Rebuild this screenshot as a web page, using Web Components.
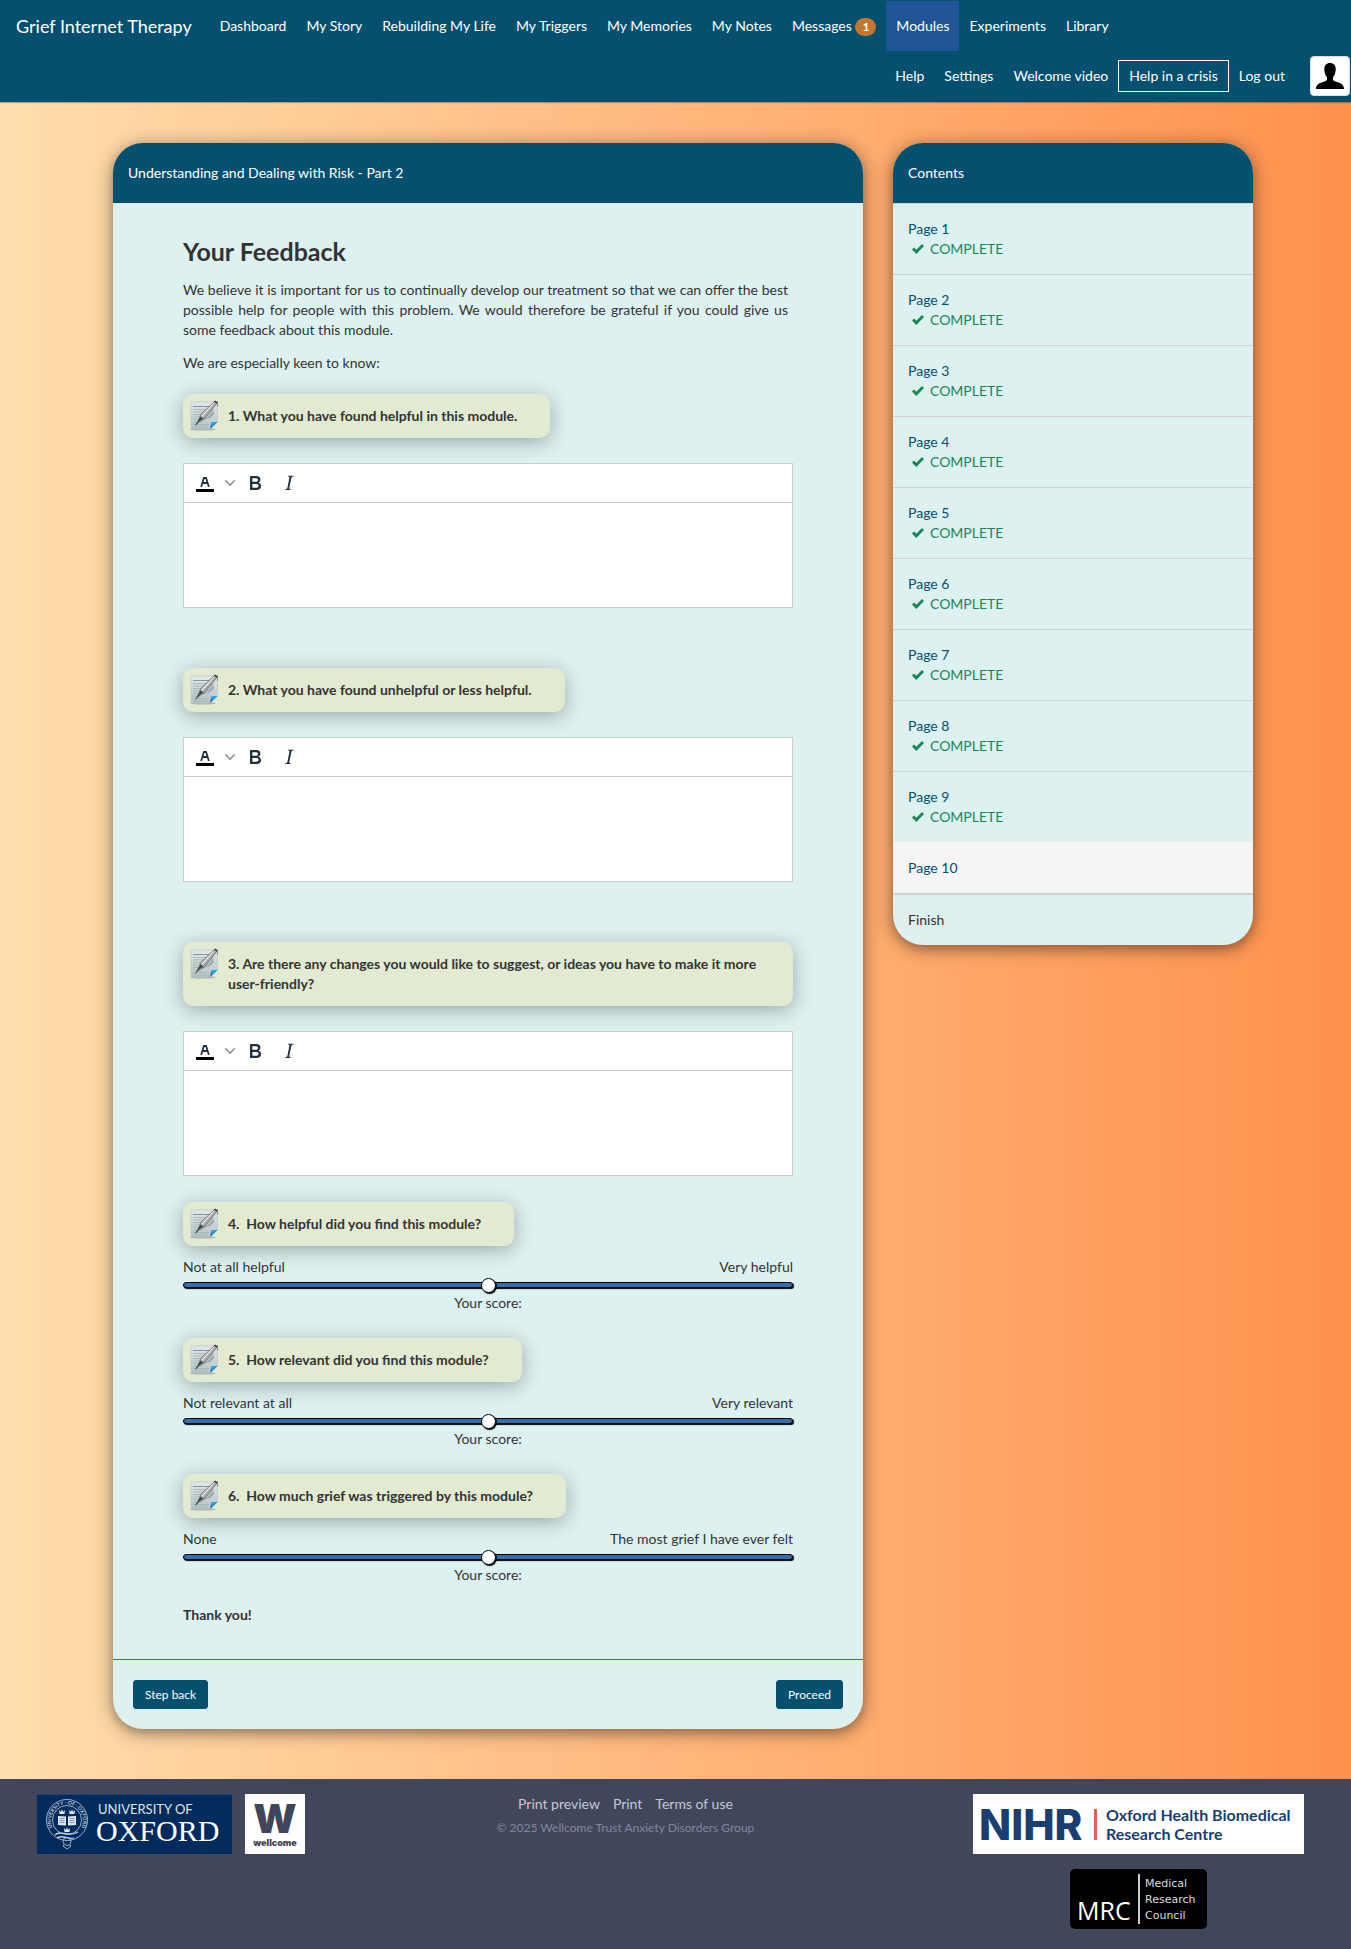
<!DOCTYPE html>
<html lang="en">
<head>
<meta charset="utf-8">
<meta name="viewport" content="width=device-width, initial-scale=1">
<title>Grief Internet Therapy</title>
<style>
  :root { --brand: #04506e; --panel: #ddf1f0; --rule: #ccc; --ink: #333; }
  body {
    margin: 0; min-height: 100vh; display: flex; flex-direction: column;
    font: 14px/20px Lato, sans-serif; color: var(--ink);
    background: linear-gradient(to right, #ffdead, #ff914d);
  }
  main {
    flex: 1; display: grid; grid-template-columns: minmax(0, 750px) minmax(0, 360px);
    gap: 30px; justify-content: center; align-items: start; padding: 41px 0 50px 15px;
  }
  h1 { margin: 0 0 16px; font-size: 25px; line-height: 26px; font-weight: 700; }
  p { margin: 0 5px 13px 0; text-align: justify; }
  p.lead-in { margin-bottom: 21px; }
  p.thanks { margin: 0; font-weight: 700; }
</style>
</head>
<body>
<site-nav></site-nav>
<main>
  <panel-card>
    <span slot="title">Understanding and Dealing with Risk - Part 2</span>
    <module-form>
      <h1>Your Feedback</h1>
      <p>We believe it is important for us to continually develop our treatment so that we can offer the best possible help for people with this problem. We would therefore be grateful if you could give us some feedback about this module.</p>
      <p class="lead-in">We are especially keen to know:</p>
      <text-question>1. What you have found helpful in this module.</text-question>
      <text-question>2. What you have found unhelpful or less helpful.</text-question>
      <text-question last>3. Are there any changes you would like to suggest, or ideas you have to make it more user-friendly?</text-question>
      <scale-question low="Not at all helpful" high="Very helpful">4.&nbsp; How helpful did you find this module?</scale-question>
      <scale-question low="Not relevant at all" high="Very relevant">5.&nbsp; How relevant did you find this module?</scale-question>
      <scale-question last low="None" high="The most grief I have ever felt">6.&nbsp; How much grief was triggered by this module?</scale-question>
      <p class="thanks">Thank you!</p>
    </module-form>
  </panel-card>
  <panel-card>
    <span slot="title">Contents</span>
    <contents-list></contents-list>
  </panel-card>
</main>
<site-footer></site-footer>

<script>
const define = (name, html, setup) => {
  const template = document.createElement('template');
  template.innerHTML = '<style>*{box-sizing:border-box}</style>' + html;
  customElements.define(name, class extends HTMLElement {
    connectedCallback() {
      if (this.shadowRoot) return;
      const root = this.attachShadow({ mode: 'open' });
      root.append(template.content.cloneNode(true));
      if (setup) setup(this, root);
    }
  });
};

define('site-nav', `
<style>
  :host { display: block; background: var(--brand); color: #fff; padding-top: 1px; border-bottom: 1px solid #0b4a63; box-shadow: 0 1px 1px rgba(0,0,0,.25); }
  nav { display: flex; flex-wrap: wrap; }
  a { color: inherit; text-decoration: none; padding: 15px 10px; white-space: nowrap; }
  .brand { font-size: 18px; padding: 15px 18px 15px 16px; }
  .active { background: #1f5594; }
  .badge { display: inline-block; min-width: 21px; padding: 3px 7px; border-radius: 10px; background: #c5762d; font-size: 12px; line-height: 12px; font-weight: 700; text-align: center; }
  .second { justify-content: flex-end; align-items: center; padding-right: 1px; }
  .crisis { border: 1px solid #fff; padding: 5px 10px; }
  .avatar { display: flex; padding: 0; margin: 0 0 0 15px; width: 40px; height: 40px; border: 1px solid #ddd; border-radius: 4px; background: #fff; align-items: center; justify-content: center; }
</style>
<nav aria-label="Main">
  <a class="brand" href="#">Grief Internet Therapy</a>
  <a href="#">Dashboard</a><a href="#">My Story</a><a href="#">Rebuilding My Life</a><a href="#">My Triggers</a><a href="#">My Memories</a><a href="#">My Notes</a><a href="#">Messages <span class="badge">1</span></a><a class="active" href="#" aria-current="page">Modules</a><a href="#">Experiments</a><a href="#">Library</a>
</nav>
<nav class="second" aria-label="Account">
  <a href="#">Help</a><a href="#">Settings</a><a href="#">Welcome video</a><a class="crisis" href="#">Help in a crisis</a><a href="#">Log out</a>
  <a class="avatar" href="#" aria-label="Profile">
    <svg width="30" height="30" viewBox="0 0 30 30"><path d="M15 2c3.600 0 5.700 2.400 5.700 6 0 3.200-1 6.500-2.700 8.300v2.200c0 1 1.200 1.500 3.200 2.200 4 1.300 7.800 2.300 7.800 7.300H1c0-5 3.800-6 7.800-7.300 2-.7 3.200-1.200 3.200-2.200v-2.200C10.300 14.500 9.300 11.200 9.300 8c0-3.600 2.100-6 5.700-6z"/></svg>
  </a>
</nav>`);

define('panel-card', `
<style>
  :host { display: block; background: var(--panel); border-radius: 30px; overflow: hidden; box-shadow: 0 4px 8px rgba(0,0,0,.15), 0 3px 20px rgba(0,0,0,.4); }
  header { background: var(--brand); color: #fff; padding: 20px 15px; }
</style>
<header><slot name="title"></slot></header>
<slot></slot>`);

define('module-form', `
<style>
  :host { display: block; }
  .body { padding: 35px 70px 34px; }
  footer { display: flex; justify-content: space-between; padding: 20px; border-top: 1px solid #2a6db8; }
  button { font: 12px/18px Lato, sans-serif; color: #fff; background: var(--brand); border: 1px solid var(--brand); border-radius: 3px; padding: 5px 11px 4px; }
</style>
<form>
  <div class="body"><slot></slot></div>
  <footer><button type="button">Step back</button><button type="button">Proceed</button></footer>
</form>`);

define('note-icon', `
<style>:host { display: block; width: 30px; height: 31px; }</style>
<svg width="30" height="31" viewBox="0 0 30 31">
  <defs>
    <linearGradient id="paper" x1="0" y1="0" x2="0" y2="1"><stop offset="0" stop-color="#e2eaeb"/><stop offset=".45" stop-color="#cbd7d9"/><stop offset="1" stop-color="#b3c3c6"/></linearGradient>
    <linearGradient id="metal" x1="0" y1="0" x2="1" y2="1"><stop offset="0" stop-color="#f5f5f5"/><stop offset=".5" stop-color="#a9adad"/><stop offset="1" stop-color="#333"/></linearGradient>
  </defs>
  <ellipse cx="13" cy="29.300" rx="13" ry="1.200" fill="#8a9488" opacity=".6"/>
  <path d="M1 2h26.500v20L20 29H1z" fill="url(#paper)" stroke="#b5c3c4" stroke-width=".6"/>
  <path d="M3 6.500h17" stroke="#8b9799" stroke-width="1"/>
  <path d="M3 9.500h15M3 12h13M3 14.500h10M3 17h8M3 19.500h5M3 22h3M3 24.500h16M3 27h15" stroke="#a5b3b5" stroke-width=".8"/>
  <path d="M8 23c5-1 13-7 15-14l1 5c-2 3-6 5-8 5-3 1-5 3-8 4z" fill="#67757a" opacity=".45"/>
  <path d="M24.500 1.500l2.500 1.700-12.500 16-3.500 1.300-5.500 5 4-7.500 1-3.500z" fill="url(#metal)" stroke="#666" stroke-width=".7"/>
  <path d="M23.500 3.500L11 17.500" stroke="#fff" stroke-width="1"/>
  <path d="M10.500 16l3 2.500-3 2-5 4.500 3.500-6z" fill="#444b4b"/>
  <path d="M24.500 1l3 2.200" stroke="#222" stroke-width="1.200"/><path d="M27.500 1v6" stroke="#888" stroke-width=".9"/>
  <path d="M20 29l1.500-6.500 6-.5z" fill="#0b6cc0"/>
  <path d="M21.500 22.500l6-.5-5.500 4z" fill="#25b1ee"/>
</svg>`);

/* Shared look of the highlighted question label */
const noteStyle = `
  .note { display: flex; width: fit-content; max-width: 100%; padding: 12px 33px 12px 7px; gap: 8px; border-radius: 10px; background: #e2ead2; font-weight: 700; box-shadow: 0 4px 20px rgba(0,0,0,.3); }
  note-icon { flex: none; margin: -6px 0 -5px; }`;

define('text-question', `
<style>
  :host { display: block; margin-bottom: 60px; }
  :host([last]) { margin-bottom: 26px; }
  ${noteStyle}
  .editor { margin-top: 25px; border: 1px solid var(--rule); background: #fff; }
  .tools { display: flex; padding-left: 4px; height: 39px; border-bottom: 1px solid var(--rule); }
  button { display: flex; align-items: center; justify-content: center; width: 34px; padding: 0; border: 0; background: none; fill: #222f3e; }
  button.more { width: 16px; fill: #8f969e; }
  textarea { display: block; width: 100%; height: 104px; padding: 10px; border: 0; outline: 0; resize: none; background: none; font: inherit; color: inherit; }
</style>
<label class="note" for="answer"><note-icon></note-icon><span><slot></slot></span></label>
<div class="editor">
  <div class="tools">
    <button type="button" aria-label="Text colour"><svg width="24" height="24" viewBox="0 0 24 24"><path fill="#000" d="M3 18h18v3H3z"/><path fill-rule="evenodd" d="M8.700 16h-.8a.5.5 0 01-.5-.6l2.700-9c.1-.3.3-.4.5-.4h2.800c.2 0 .4.1.5.4l2.700 9a.5.5 0 01-.5.6h-.8a.5.5 0 01-.4-.4l-.7-2.200c0-.3-.3-.4-.5-.4h-3.400c-.2 0-.4.1-.5.4l-.7 2.200c0 .3-.2.4-.4.4zm2.600-7.600l-.6 2a.5.5 0 00.5.6h1.600a.5.5 0 00.5-.6l-.6-2c0-.3-.3-.4-.5-.4h-.4c-.2 0-.4.1-.5.4z"/></svg></button>
    <button type="button" class="more" aria-label="Choose colour"><svg width="10" height="10" viewBox="0 0 10 10"><path d="M8.700 2.200c.3-.3.8-.3 1 0 .4.4.4.9 0 1.200L5.700 7.800c-.3.3-.9.3-1.200 0L.2 3.400a.8.8 0 010-1.200c.3-.3.8-.3 1.100 0L5 6l3.700-3.800z"/></svg></button>
    <button type="button" aria-label="Bold"><svg width="24" height="24" viewBox="0 0 24 24"><path fill-rule="evenodd" d="M7.800 19c-.3 0-.5 0-.6-.2l-.2-.5V5.700c0-.2 0-.4.2-.5l.6-.2h5c1.500 0 2.700.3 3.500 1 .7.6 1.100 1.400 1.100 2.500a3 3 0 01-.6 1.900c-.4.6-1 1-1.600 1.200.4.1.9.3 1.300.6s.8.7 1 1.200c.4.4.5 1 .5 1.600 0 1.300-.4 2.300-1.300 3-.8.7-2.100 1-3.800 1H7.800zm5-8.300c.6 0 1.200-.1 1.600-.5.4-.3.6-.7.6-1.300 0-1.100-.8-1.700-2.300-1.700H9.300v3.500h3.400zm.5 6c.7 0 1.300-.1 1.700-.4.4-.4.6-.9.6-1.500s-.2-1-.7-1.400c-.4-.3-1-.4-2-.4H9.400v3.800h4z"/></svg></button>
    <button type="button" aria-label="Italic"><svg width="24" height="24" viewBox="0 0 24 24"><path fill-rule="evenodd" d="M16.700 4.700l-.1.9h-.3c-.6 0-1 0-1.400.3-.3.3-.4.6-.5 1.100l-2.100 9.800v.6c0 .5.4.8 1.400.8h.2l-.2.8H8l.2-.8h.2c1.100 0 1.800-.5 2-1.500l2-9.800.1-.5c0-.6-.4-.8-1.400-.8h-.3l.2-.9h5.800z"/></svg></button>
  </div>
  <textarea id="answer"></textarea>
</div>`);

define('scale-question', `
<style>
  :host { display: block; margin-bottom: 25px; }
  :host([last]) { margin-bottom: 20px; }
  ${noteStyle}
  .ends { display: flex; justify-content: space-between; margin-top: 11px; }
  input { -webkit-appearance: none; appearance: none; display: block; width: 100%; height: 15px; margin: 0 0 1px; background: none; }
  input::-webkit-slider-runnable-track { height: 6px; background: #3071a9; border: 1px solid #000; border-radius: 3px; box-shadow: 1px 1px 1px #000; }
  input::-webkit-slider-thumb { -webkit-appearance: none; width: 15px; height: 15px; margin-top: -5px; border: 1px solid #000; border-radius: 50%; background: #fff; box-shadow: 1px 1px 1px #000; }
  .score { text-align: center; }
</style>
<label class="note" for="score"><note-icon></note-icon><span><slot></slot></span></label>
<div class="ends"><span id="low"></span><span id="high"></span></div>
<input id="score" type="range" min="0" max="100" value="50">
<div class="score">Your score:</div>`, (host, root) => {
  root.getElementById('low').textContent = host.getAttribute('low');
  root.getElementById('high').textContent = host.getAttribute('high');
});

define('contents-list', `
<style>
  :host { display: block; }
  ul { margin: 0; padding: 0; list-style: none; }
  li { padding: 15px; border-top: 1px solid #d0d0d0; }
  li.current { background: #f5f5f5; border-top-color: #f5f5f5; }
  li.finish { border-top-width: 2px; }
  a { color: var(--brand); text-decoration: none; }
  .done { display: flex; align-items: center; gap: 6px; padding-left: 4px; color: #198754; }
</style>
<ul></ul>`, (host, root) => {
  const list = root.querySelector('ul');
  for (let n = 1; n <= 9; n++) {
    list.insertAdjacentHTML('beforeend', `<li><a href="#">Page ${n}</a><div class="done"><svg width="12" height="12" viewBox="0 0 12 12"><path fill="#198754" d="M0 6.500l2-2.100 2.300 2.400L10 .9l2 2-7.700 8z"/></svg>COMPLETE</div></li>`);
  }
  list.insertAdjacentHTML('beforeend', '<li class="current"><a href="#" aria-current="page">Page 10</a></li><li class="finish">Finish</li>');
});

define('oxford-logo', `
<style>:host, svg { display: block; }</style>
<svg width="195" height="60" viewBox="0 0 195 60" role="img" aria-label="University of Oxford">
  <rect width="195" height="60" fill="#002b5c"/>
  <path d="M0 .5h195" stroke="#17477c"/>
  <g fill="none" stroke="#c3cedc" stroke-width=".8">
    <circle cx="30" cy="26" r="20.500"/><circle cx="30" cy="26" r="14.500"/>
    <path d="M18 41c5-6 13 3 23-3M20 44c7-4 10 2 17 0" stroke-width="1.300"/>
    <circle cx="30" cy="47.500" r="4"/><path d="M27 51l-1 1 4 3 4-3-1-1"/>
  </g>
  <path id="ring" d="M19 38a16 16 0 1 1 22 0" fill="none"/>
  <text font-family="Lato, sans-serif" font-size="5" font-weight="700" fill="#c3cedc"><textPath href="#ring" startOffset="50%" text-anchor="middle">UNIVERSITY · OF · OXFORD</textPath></text>
  <g fill="#e3e9f0">
    <path d="M21 22l8 .5v9l-8-.5zM31 22.500l8-.5v9l-8 .5z"/>
    <path d="M22 16l2 2 1-3 1 3 2-2-.5 4h-5zM32 16l2 2 1-3 1 3 2-2-.5 4h-5zM27 34l2 2 1-3 1 3 2-2-.5 4h-5z"/>
  </g>
  <path d="M22.500 24.500h5M22.500 26.500h5M22.500 28.500h5M32.500 24.500h5M32.500 26.500h5M32.500 28.500h5" stroke="#4d6b8e" stroke-width=".7"/>
  <text x="61" y="20" font-family="Lato, sans-serif" font-size="13" fill="#dfe6ee">UNIVERSITY OF</text>
  <text x="59" y="47" font-family="Liberation Serif, serif" font-size="30" fill="#fff">OXFORD</text>
</svg>`);

define('wellcome-logo', `
<style>:host, svg { display: block; }</style>
<svg width="60" height="60" viewBox="0 0 60 60" role="img" aria-label="Wellcome">
  <rect width="60" height="60" fill="#fff"/>
  <g fill="#41455b" text-anchor="middle" font-family="Inter, sans-serif" font-weight="900">
    <text x="30" y="39" font-size="40">W</text><text x="30" y="52" font-size="9">wellcome</text>
  </g>
</svg>`);

define('nihr-logo', `
<style>:host, svg { display: block; }</style>
<svg width="331" height="60" viewBox="0 0 331 60" role="img" aria-label="NIHR Oxford Health Biomedical Research Centre">
  <rect width="331" height="60" fill="#fff"/>
  <g fill="#193e72" font-weight="700">
    <text x="6" y="46" font-family="Inter, sans-serif" font-size="42" font-weight="800">NIHR</text>
    <g font-family="Lato, sans-serif" font-size="16"><text x="133" y="27">Oxford Health Biomedical</text><text x="133" y="46">Research Centre</text></g>
  </g>
  <rect x="121" y="15" width="3" height="31" fill="#ea5d4e"/>
</svg>`);

define('mrc-logo', `
<style>:host, svg { display: block; }</style>
<svg width="137" height="60" viewBox="0 0 137 60" role="img" aria-label="MRC Medical Research Council">
  <rect width="137" height="60" rx="5"/>
  <rect x="68" y="5" width="2" height="50" fill="#ccc"/>
  <g fill="#fff">
    <text x="7" y="51" font-family="Open Sans, sans-serif" font-size="25">MRC</text>
    <g font-family="DejaVu Sans, sans-serif" font-size="11" fill="#ddd"><text x="75" y="18">Medical</text><text x="75" y="34">Research</text><text x="75" y="50">Council</text></g>
  </g>
</svg>`);

define('site-footer', `
<style>
  :host { display: grid; grid-template-columns: 13fr 24fr 17fr; background: #41465b; color: #c5c8d6; padding: 15px 0 20px; }
  .left { display: flex; align-items: start; gap: 13px; padding-left: 37px; }
  .mid { text-align: center; }
  .links { display: flex; justify-content: center; gap: 13px; }
  .mid small { display: block; font-size: 12px; line-height: 20px; margin-top: 4px; color: #8286a0; }
  .right { display: flex; flex-direction: column; align-items: center; gap: 15px; }
  a { color: inherit; text-decoration: none; }
</style>
<div class="left"><oxford-logo></oxford-logo><wellcome-logo></wellcome-logo></div>
<div class="mid">
  <div class="links"><a href="#">Print preview</a><a href="#">Print</a><a href="#">Terms of use</a></div>
  <small>© 2025 Wellcome Trust Anxiety Disorders Group</small>
</div>
<div class="right"><nihr-logo></nihr-logo><mrc-logo></mrc-logo></div>`);
</script>
</body>
</html>
